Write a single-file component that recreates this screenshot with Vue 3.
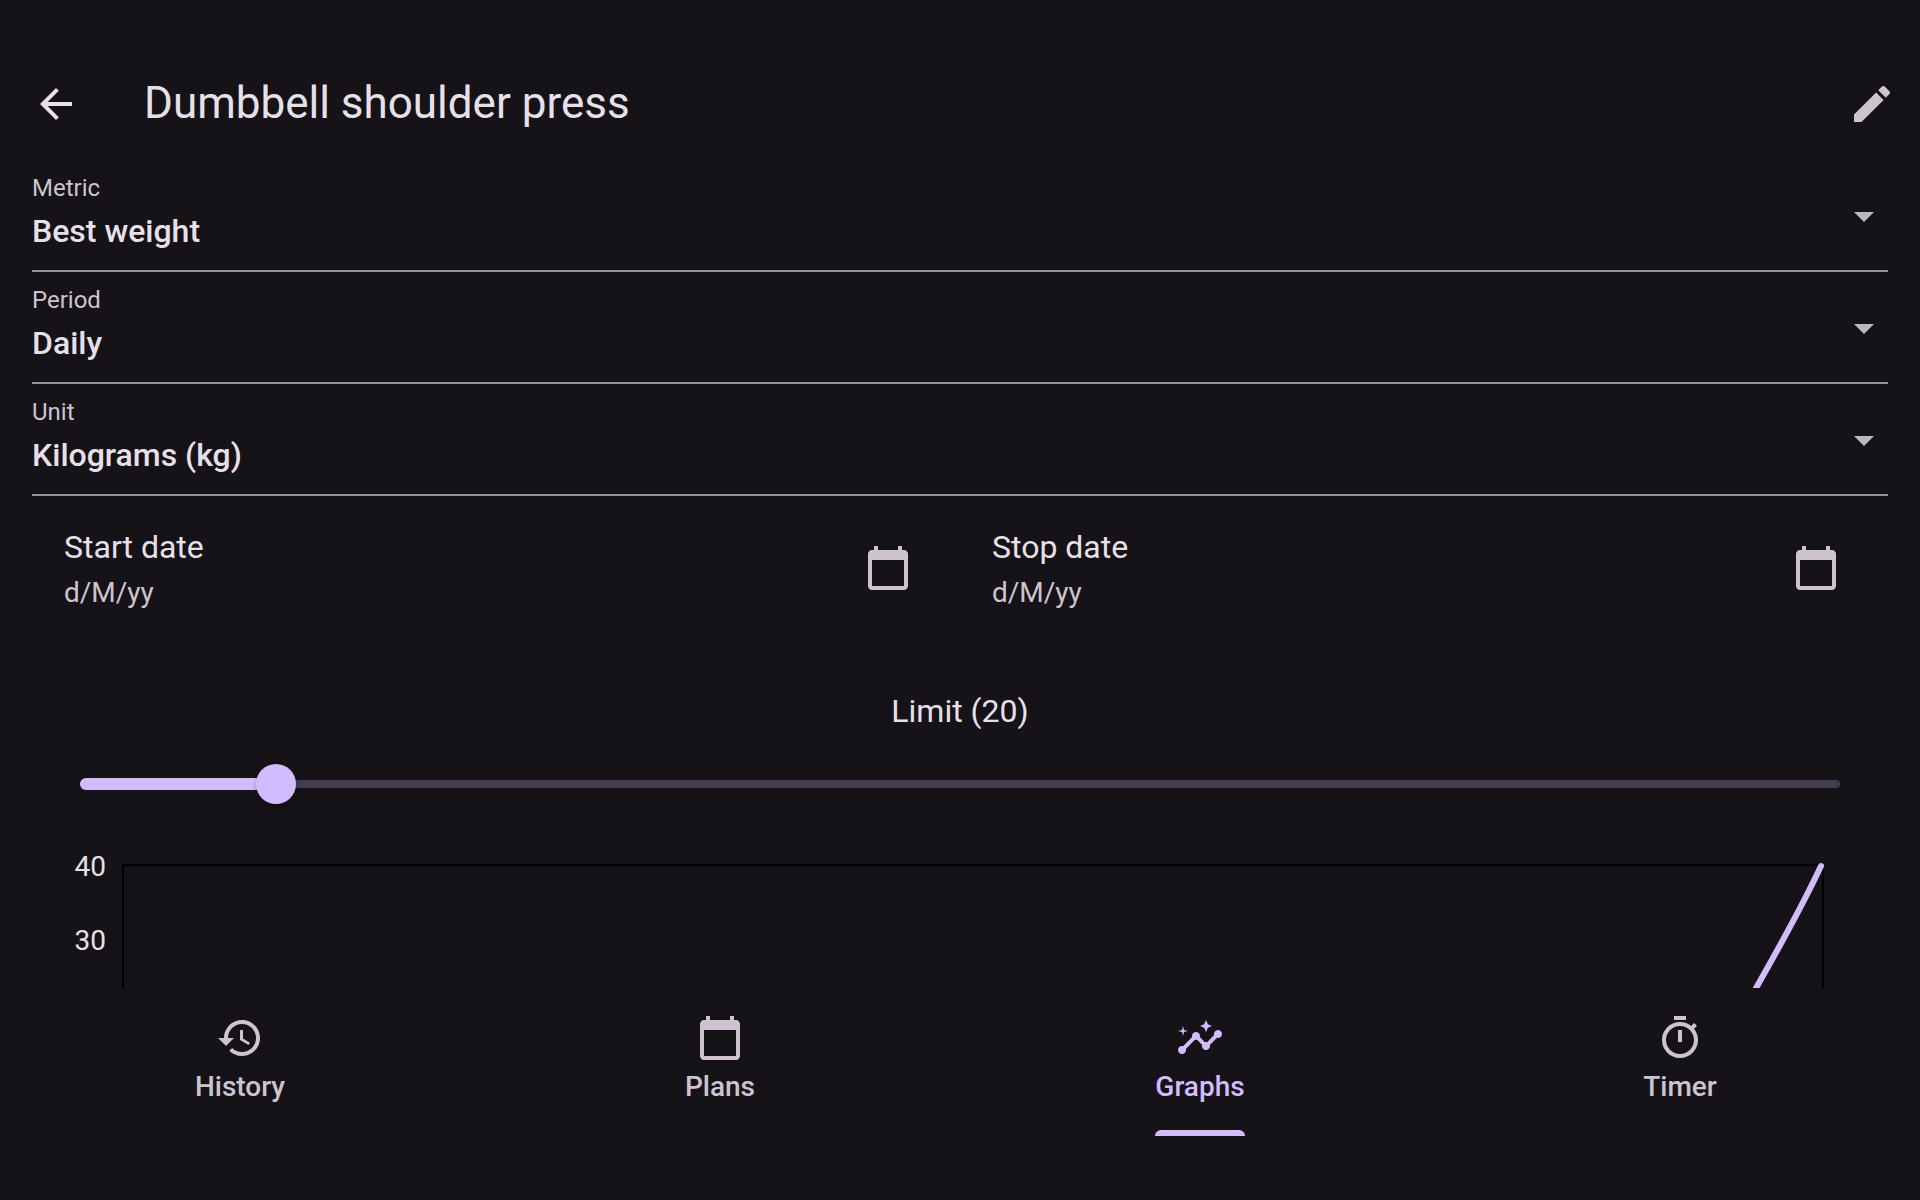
<script setup>
import { computed, ref } from 'vue'

const fields = [
  { id: 'metric', label: 'Metric', value: 'Best weight' },
  { id: 'period', label: 'Period', value: 'Daily' },
  { id: 'unit', label: 'Unit', value: 'Kilograms (kg)' },
]

const dates = [
  { label: 'Start date', value: 'd/M/yy' },
  { label: 'Stop date', value: 'd/M/yy' },
]

const MIN_LIMIT = 10
const MAX_LIMIT = 100
const limit = ref(20)
const limitPercent = computed(() => ((limit.value - MIN_LIMIT) / (MAX_LIMIT - MIN_LIMIT)) * 100)

const ticks = [40, 30]

const calendarIcon =
  'M20 3h-1V1h-2v2H7V1H5v2H4c-1.1 0-2 .9-2 2v16c0 1.1.9 2 2 2h16c1.1 0 2-.9 2-2V5c0-1.1-.9-2-2-2zm0 18H4V8h16v13z'

const tabs = [
  {
    label: 'History',
    icon: 'M13 3c-4.97 0-9 4.03-9 9H1l3.89 3.89.07.14L9 12H6c0-3.87 3.13-7 7-7s7 3.13 7 7-3.13 7-7 7c-1.93 0-3.68-.79-4.94-2.06l-1.42 1.42C8.27 19.99 10.51 21 13 21c4.97 0 9-4.03 9-9s-4.03-9-9-9zm-1 5v5l4.28 2.54.72-1.21-3.5-2.08V8H12z',
  },
  { label: 'Plans', icon: calendarIcon },
  {
    label: 'Graphs',
    active: true,
    icon: 'M21 8c-1.45 0-2.26 1.44-1.93 2.51l-3.55 3.56c-.3-.09-.74-.09-1.04 0l-2.55-2.55C12.27 10.45 11.46 9 10 9c-1.45 0-2.27 1.44-1.93 2.52l-4.56 4.55C2.44 15.74 1 16.55 1 18c0 1.1.9 2 2 2 1.45 0 2.26-1.44 1.93-2.51l4.55-4.56c.3.09.74.09 1.04 0l2.55 2.55C12.73 16.55 13.54 18 15 18c1.45 0 2.27-1.44 1.93-2.52l3.56-3.55C21.56 12.26 23 11.45 23 10c0-1.1-.9-2-2-2zM15 9l.94-2.07L18 6l-2.06-.93L15 3l-.92 2.07L12 6l2.08.93zM3.5 11L4 9l2-.5L4 8l-.5-2L3 8l-2 .5L3 9z',
  },
  {
    label: 'Timer',
    icon: 'M15 1H9v2h6V1zm-4 13h2V8h-2v6zm8.03-6.61l1.42-1.42c-.43-.51-.9-.99-1.41-1.41l-1.42 1.42C16.07 4.74 14.12 4 12 4c-4.97 0-9 4.03-9 9s4.02 9 9 9 9-4.03 9-9c0-2.12-.74-4.07-1.97-5.61zM12 20c-3.87 0-7-3.13-7-7s3.13-7 7-7 7 3.13 7 7-3.13 7-7 7z',
  },
]
</script>

<template>
  <div class="app">
    <header class="app-bar">
      <button class="icon-button" type="button" aria-label="Back">
        <svg class="icon" viewBox="0 0 24 24"><path d="M20 11H7.83l5.59-5.59L12 4l-8 8 8 8 1.41-1.41L7.83 13H20v-2z" /></svg>
      </button>
      <h1 class="title">Dumbbell shoulder press</h1>
      <button class="icon-button edit" type="button" aria-label="Edit">
        <svg class="icon" viewBox="0 0 24 24"><path d="M3 17.25V21h3.75L17.81 9.94l-3.75-3.75L3 17.25zM20.71 7.04c.39-.39.39-1.02 0-1.41l-2.34-2.34c-.39-.39-1.02-.39-1.41 0l-1.83 1.83 3.75 3.75 1.83-1.83z" /></svg>
      </button>
    </header>

    <main class="content">
      <div v-for="field in fields" :key="field.id" class="field">
        <label class="field-label" :for="field.id">{{ field.label }}</label>
        <select :id="field.id" class="field-select">
          <option>{{ field.value }}</option>
        </select>
        <svg class="icon field-arrow" viewBox="0 0 24 24" aria-hidden="true"><path d="M7 10l5 5 5-5z" /></svg>
      </div>

      <div class="dates">
        <button v-for="date in dates" :key="date.label" class="date" type="button">
          <span class="date-text">
            <span class="date-label">{{ date.label }}</span>
            <span class="date-value">{{ date.value }}</span>
          </span>
          <svg class="icon" viewBox="0 0 24 24" aria-hidden="true"><path :d="calendarIcon" /></svg>
        </button>
      </div>

      <label class="limit-label" for="limit">Limit ({{ limit }})</label>
      <div class="slider">
        <div class="rail">
          <div class="rail-active" :style="{ width: limitPercent + '%' }"></div>
        </div>
        <input id="limit" v-model.number="limit" class="range" type="range" :min="MIN_LIMIT" :max="MAX_LIMIT" step="10" />
      </div>

      <div class="chart">
        <div class="axis">
          <span v-for="tick in ticks" :key="tick" class="tick">{{ tick }}</span>
        </div>
        <div class="plot">
          <svg class="line" width="160" height="300" viewBox="0 0 160 300" aria-hidden="true">
            <path d="M159 0C138 45 115 85 93 124C65 174 36 228 0 298" />
          </svg>
        </div>
      </div>
    </main>

    <nav class="tabs">
      <a v-for="tab in tabs" :key="tab.label" class="tab" :class="{ active: tab.active }" href="#">
        <span class="tab-body">
          <svg class="icon" viewBox="0 0 24 24" aria-hidden="true"><path :d="tab.icon" /></svg>
          <span class="tab-label">{{ tab.label }}</span>
        </span>
      </a>
    </nav>
  </div>
</template>

<style>
body {
  margin: 0;
  background: #151218;
}
</style>

<style scoped>
.app {
  --text: #e8e0e8;
  --muted: #cdc4d0;
  --primary: #d2bcfd;
  box-sizing: border-box;
  display: flex;
  flex-direction: column;
  height: 100vh;
  padding: 48px 0 64px;
  background: #151218;
  color: var(--text);
  font-family: Roboto, "Liberation Sans", sans-serif;
}

button,
select {
  margin: 0;
  padding: 0;
  border: 0;
  background: none;
  color: inherit;
  font-family: inherit;
}

.icon {
  display: block;
  flex: none;
  width: 48px;
  height: 48px;
  fill: currentColor;
}

.app-bar {
  display: flex;
  flex: none;
  align-items: center;
  height: 112px;
  padding: 0 24px 0 32px;
}

.title {
  flex: 1;
  margin: 0 0 0 64px;
  padding-bottom: 2px;
  font-size: 44px;
  font-weight: 400;
  line-height: 56px;
}

.edit {
  color: var(--muted);
}

.content {
  flex: 1;
  min-height: 0;
  padding: 0 32px;
  overflow: hidden;
}

.field {
  display: grid;
  grid-template-columns: 1fr 48px;
  grid-template-rows: 56px 54px;
  height: 110px;
  border-bottom: 2px solid #928f99;
}

.field-label {
  grid-area: 1 / 1;
  align-self: center;
  color: var(--muted);
  font-size: 24px;
  line-height: 32px;
}

.field-select {
  grid-area: 1 / 1 / 3 / 3;
  appearance: none;
  height: 110px;
  padding: 32px 48px 0 0;
  font-size: 32px;
  font-weight: 500;
}

.field-arrow {
  grid-area: 1 / 2 / 3 / 3;
  align-self: center;
  padding-top: 2px;
  color: #bababa;
  pointer-events: none;
}

.dates {
  display: flex;
}

.date {
  display: flex;
  flex: 1;
  align-items: center;
  justify-content: space-between;
  height: 144px;
  padding: 0 48px 0 32px;
  color: var(--muted);
  text-align: left;
}

.date-text {
  display: flex;
  flex-direction: column;
  gap: 2px;
}

.date-label {
  color: var(--text);
  font-size: 32px;
  line-height: 48px;
}

.date-value {
  font-size: 28px;
  line-height: 40px;
}

.limit-label {
  display: block;
  margin: 48px 0 2px;
  font-size: 32px;
  line-height: 46px;
  text-align: center;
}

.slider {
  display: grid;
  align-items: center;
  height: 96px;
  padding: 0 28px;
}

.rail {
  display: flex;
  grid-area: 1 / 1;
  align-items: center;
  height: 8px;
  margin: 0 20px;
  border-radius: 4px;
  background: #443d50;
}

.rail-active {
  height: 12px;
  border-radius: 6px;
  background: var(--primary);
}

.range {
  grid-area: 1 / 1;
  appearance: none;
  width: 100%;
  height: 40px;
  margin: 0;
  background: none;
}

.range::-webkit-slider-thumb {
  appearance: none;
  width: 40px;
  height: 40px;
  border-radius: 50%;
  background: var(--primary);
  box-shadow: 0 2px 4px rgb(0 0 0 / 30%);
}

.chart {
  display: flex;
  gap: 16px;
  padding: 32px 64px 0 32px;
}

.axis {
  display: flex;
  flex-direction: column;
  gap: 42px;
  width: 42px;
  margin-top: -13px;
}

.tick {
  font-size: 28px;
  line-height: 32px;
  text-align: right;
}

.plot {
  display: flex;
  flex: 1;
  justify-content: flex-end;
  height: 300px;
  border: 2px solid #000;
}

.line {
  flex: none;
  overflow: visible;
  fill: none;
  stroke: var(--primary);
  stroke-width: 6px;
  stroke-linecap: round;
}

.tabs {
  display: flex;
  flex: none;
}

.tab {
  display: flex;
  flex: 1;
  justify-content: center;
  color: var(--muted);
  text-decoration: none;
}

.tab-body {
  display: flex;
  flex-direction: column;
  align-items: center;
  box-sizing: border-box;
  height: 148px;
  padding-top: 26px;
}

.tab-label {
  margin-top: 4px;
  font-size: 28px;
  font-weight: 500;
  line-height: 42px;
}

.active {
  color: var(--primary);
}

.active .tab-body::after {
  width: 100%;
  height: 6px;
  margin-top: auto;
  border-radius: 6px 6px 0 0;
  background: var(--primary);
  content: "";
}
</style>
